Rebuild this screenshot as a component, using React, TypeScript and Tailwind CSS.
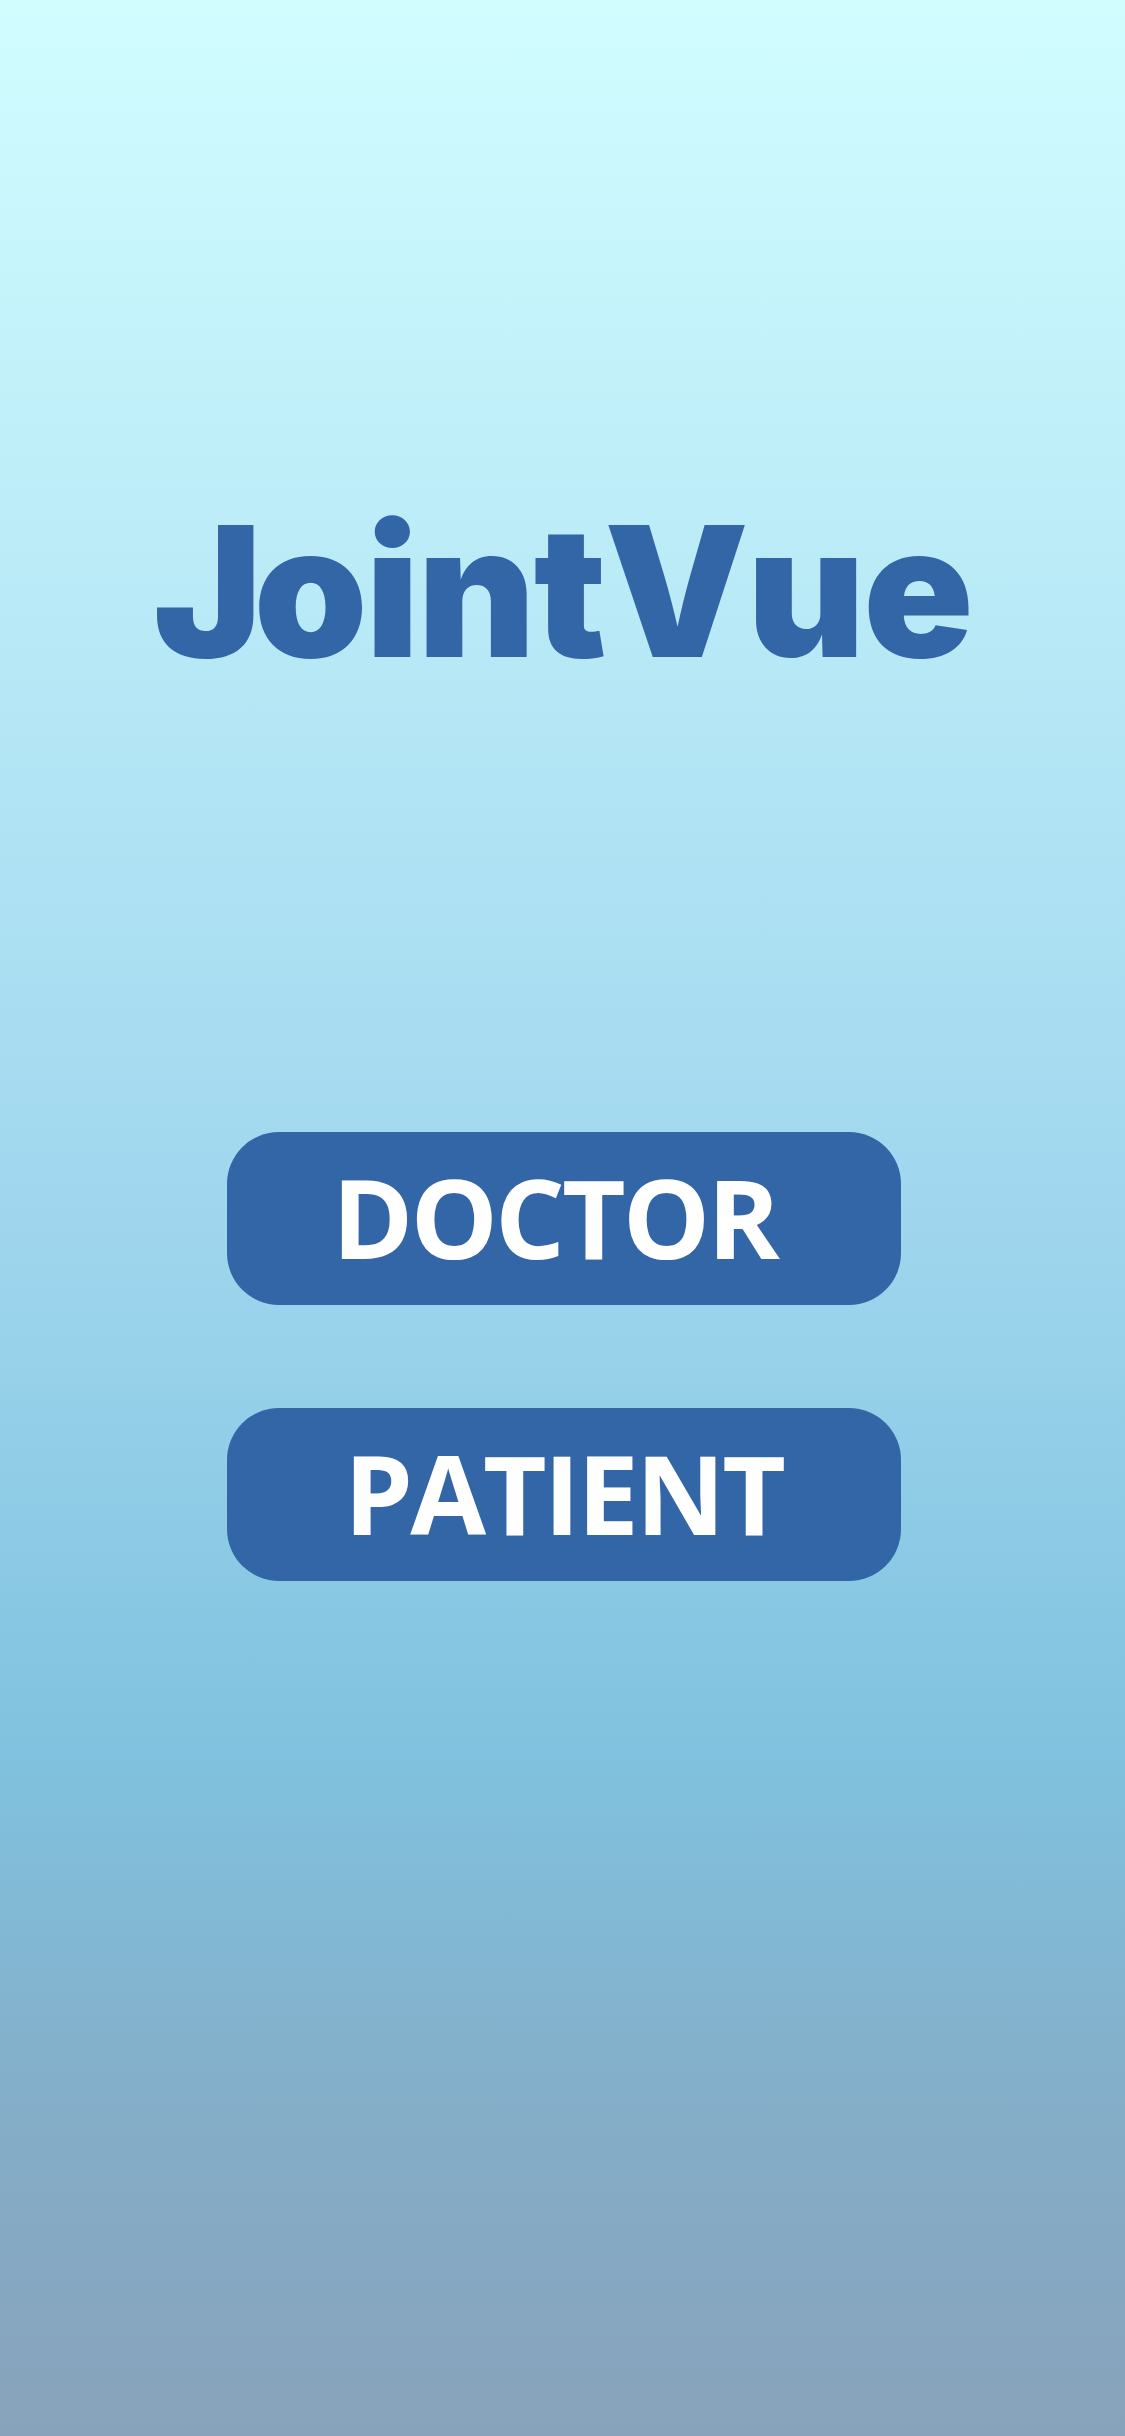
import React from "react";

function RoleButton({ label, nudge }: { label: string; nudge: string }) {
  return (
    <button
      type="button"
      className={`flex h-[173px] w-[674px] items-center justify-center rounded-[52px] bg-[#3366a7] pb-[6px] font-['Open_Sans',sans-serif] text-[110px] font-bold leading-none tracking-[-3px] text-white ${nudge}`}
    >
      {label}
    </button>
  );
}

export default function App() {
  return (
    <div className="flex min-h-[2436px] w-full flex-col items-center bg-[linear-gradient(to_bottom,#d1fdff_0%,#a2d8ef_48%,#80c2df_72%,#84aec9_86%,#88a2bb_100%)]">
      <h1 className="mt-[500px] font-['Inter',sans-serif] text-[182px] font-black leading-none tracking-[-2px] text-[#3366a7]">
        <span className="tracking-[-8px]">J</span>ointVue
      </h1>

      <div className="mt-[450px] flex flex-col items-center gap-[103px] pl-[2px]">
        <RoleButton label="DOCTOR" nudge="pr-[18px]" />
        <RoleButton label="PATIENT" nudge="pr-0" />
      </div>
    </div>
  );
}
